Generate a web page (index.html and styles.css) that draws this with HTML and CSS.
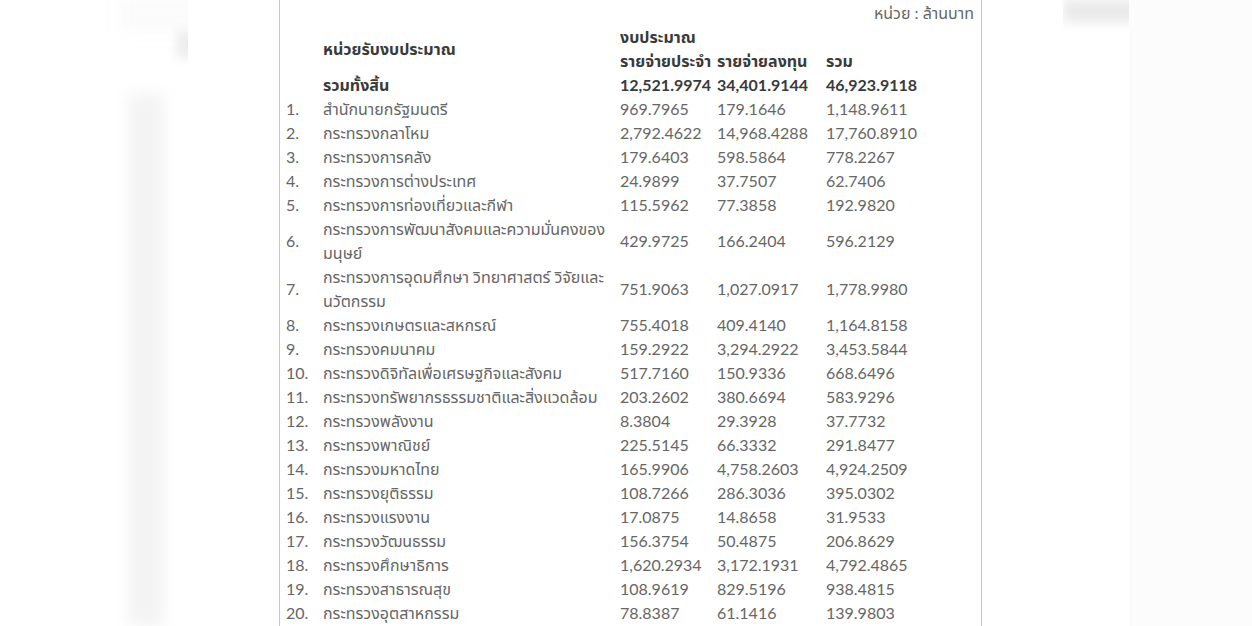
FILE: index.html
```html
<!DOCTYPE html>
<html lang="th">
<head>
<meta charset="utf-8">
<title>งบประมาณ</title>
<link rel="stylesheet" href="styles.css">
</head>
<body>
<div class="page">
  <div class="gutter gutter-left">
    <div class="backdrop-left">
      <div class="haze-left"></div>
      <div class="spot-left"></div>
      <div class="bar-left"></div>
    </div>
  </div>
  <main class="panel">
    <div class="unit">หน่วย : ล้านบาท</div>
    <table class="budget">
      <colgroup>
        <col class="c-no"><col class="c-name"><col class="c-a"><col class="c-b"><col class="c-c">
      </colgroup>
      <thead>
        <tr class="head">
          <td rowspan="2"></td>
          <td rowspan="2">หน่วยรับงบประมาณ</td>
          <td colspan="3">งบประมาณ</td>
        </tr>
        <tr class="head">
          <td>รายจ่ายประจำ</td>
          <td>รายจ่ายลงทุน</td>
          <td>รวม</td>
        </tr>
        <tr class="head">
          <td></td>
          <td>รวมทั้งสิ้น</td>
          <td>12,521.9974</td>
          <td>34,401.9144</td>
          <td>46,923.9118</td>
        </tr>
      </thead>
      <tbody>
        <tr><td>1.</td><td>สำนักนายกรัฐมนตรี</td><td>969.7965</td><td>179.1646</td><td>1,148.9611</td></tr>
        <tr><td>2.</td><td>กระทรวงกลาโหม</td><td>2,792.4622</td><td>14,968.4288</td><td>17,760.8910</td></tr>
        <tr><td>3.</td><td>กระทรวงการคลัง</td><td>179.6403</td><td>598.5864</td><td>778.2267</td></tr>
        <tr><td>4.</td><td>กระทรวงการต่างประเทศ</td><td>24.9899</td><td>37.7507</td><td>62.7406</td></tr>
        <tr><td>5.</td><td>กระทรวงการท่องเที่ยวและกีฬา</td><td>115.5962</td><td>77.3858</td><td>192.9820</td></tr>
        <tr><td>6.</td><td>กระทรวงการพัฒนาสังคมและความมั่นคงของ<br>มนุษย์</td><td>429.9725</td><td>166.2404</td><td>596.2129</td></tr>
        <tr><td>7.</td><td>กระทรวงการอุดมศึกษา วิทยาศาสตร์ วิจัยและ<br>นวัตกรรม</td><td>751.9063</td><td>1,027.0917</td><td>1,778.9980</td></tr>
        <tr><td>8.</td><td>กระทรวงเกษตรและสหกรณ์</td><td>755.4018</td><td>409.4140</td><td>1,164.8158</td></tr>
        <tr><td>9.</td><td>กระทรวงคมนาคม</td><td>159.2922</td><td>3,294.2922</td><td>3,453.5844</td></tr>
        <tr><td>10.</td><td>กระทรวงดิจิทัลเพื่อเศรษฐกิจและสังคม</td><td>517.7160</td><td>150.9336</td><td>668.6496</td></tr>
        <tr><td>11.</td><td>กระทรวงทรัพยากรธรรมชาติและสิ่งแวดล้อม</td><td>203.2602</td><td>380.6694</td><td>583.9296</td></tr>
        <tr><td>12.</td><td>กระทรวงพลังงาน</td><td>8.3804</td><td>29.3928</td><td>37.7732</td></tr>
        <tr><td>13.</td><td>กระทรวงพาณิชย์</td><td>225.5145</td><td>66.3332</td><td>291.8477</td></tr>
        <tr><td>14.</td><td>กระทรวงมหาดไทย</td><td>165.9906</td><td>4,758.2603</td><td>4,924.2509</td></tr>
        <tr><td>15.</td><td>กระทรวงยุติธรรม</td><td>108.7266</td><td>286.3036</td><td>395.0302</td></tr>
        <tr><td>16.</td><td>กระทรวงแรงงาน</td><td>17.0875</td><td>14.8658</td><td>31.9533</td></tr>
        <tr><td>17.</td><td>กระทรวงวัฒนธรรม</td><td>156.3754</td><td>50.4875</td><td>206.8629</td></tr>
        <tr><td>18.</td><td>กระทรวงศึกษาธิการ</td><td>1,620.2934</td><td>3,172.1931</td><td>4,792.4865</td></tr>
        <tr><td>19.</td><td>กระทรวงสาธารณสุข</td><td>108.9619</td><td>829.5196</td><td>938.4815</td></tr>
        <tr><td>20.</td><td>กระทรวงอุตสาหกรรม</td><td>78.8387</td><td>61.1416</td><td>139.9803</td></tr>
      </tbody>
    </table>
  </main>
  <div class="gutter gutter-right">
    <div class="backdrop-right">
      <div class="box-right"></div>
    </div>
    <div class="column-right"></div>
  </div>
</div>
</body>
</html>
```

FILE: styles.css
```css
html, body {
  margin: 0;
  padding: 0;
  background: #ffffff;
}

.page {
  display: flex;
  height: 626px;
  overflow: hidden;
}

.gutter {
  flex: none;
  height: 100%;
  overflow: hidden;
}

.gutter-left {
  width: 279px;
}

.backdrop-left {
  width: 188px;
  height: 100%;
  overflow: hidden;
  display: flex;
  flex-direction: column;
}

.haze-left {
  margin-left: 118px;
  width: 90px;
  height: 30px;
  background: #fbfbfb;
  filter: blur(8px);
}

.spot-left {
  margin-left: 176px;
  width: 20px;
  height: 28px;
  background: #eeeeee;
  filter: blur(5px);
}

.bar-left {
  margin-top: 36px;
  margin-left: 128px;
  width: 36px;
  flex: 1;
  background: #f3f3f3;
  filter: blur(8px);
}

.panel {
  flex: none;
  width: 701px;
  height: 100%;
  border-left: 1px solid #c9c9c9;
  border-right: 1px solid #c9c9c9;
  padding-top: 1px;
  box-sizing: content-box;
  font-family: Lato, "Noto Sans Thai", "Noto Sans Thai UI", "Noto Sans", sans-serif;
  font-size: 16px;
  color: #666666;
}

.unit {
  height: 24px;
  line-height: 24px;
  text-align: right;
  padding-right: 7px;
}

.budget {
  margin-left: 3px;
  border-collapse: collapse;
  table-layout: fixed;
  width: 640px;
}

.c-no { width: 37px; }
.c-name { width: 297px; }
.c-a { width: 97px; }
.c-b { width: 109px; }
.c-c { width: 100px; }

.budget td {
  padding: 0 3px;
  line-height: 24px;
  vertical-align: middle;
  white-space: nowrap;
}

.head td {
  font-weight: bold;
  color: #3a3a3a;
}

.gutter-right {
  flex: 1;
  display: flex;
}

.backdrop-right {
  margin-left: 81px;
  width: 66px;
  height: 100%;
  overflow: hidden;
}

.box-right {
  width: 80px;
  height: 22px;
  background: #e9e9e9;
  filter: blur(6px);
}

.column-right {
  flex: 1;
  height: 100%;
  background: #fcfcfc;
}
```
